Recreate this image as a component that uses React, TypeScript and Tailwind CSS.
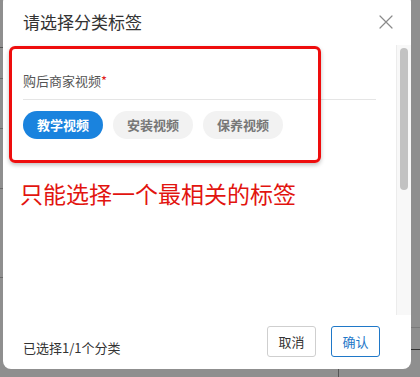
import React, { useState } from 'react'

const tags = ['教学视频', '安装视频', '保养视频']

const App: React.FC = () => {
  const [selected, setSelected] = useState('教学视频')

  return (
    <div
      className="relative w-[420px] h-[377px] overflow-hidden bg-[#8f8f8f]"
      style={{ fontFamily: '"Noto Sans CJK SC", "Noto Sans", sans-serif' }}
    >
      {/* underlying page lines */}
      <div className="absolute left-0 top-[47px] w-[3px] h-px bg-[#555]" />
      <div className="absolute left-0 top-[78px] w-[3px] h-px bg-[#6a6a6a]" />
      <div className="absolute left-0 top-[128px] w-[3px] h-px bg-[#6a6a6a]" />
      <div className="absolute left-0 top-[188px] w-[3px] h-px bg-[#6a6a6a]" />
      <div className="absolute left-0 top-[277px] w-[3px] h-px bg-[#6a6a6a]" />
      <div className="absolute right-0 top-[327px] w-[9px] h-px bg-[#7a7a7a]" />
      <div className="absolute right-0 top-[349px] w-[9px] h-px bg-[#333]" />
      <div className="absolute left-[338px] top-[369px] w-px h-[8px] bg-[#555]" />

      {/* modal */}
      <div className="relative ml-[3px] mt-[-6px] w-[408px] h-[375px] bg-white rounded-lg flex flex-col">
        {/* header */}
        <div className="h-[51px] shrink-0 flex items-center justify-between pl-[20px] pr-[17px] pt-[4px]">
          <h1 className="text-[17px] text-[#333] leading-6">请选择分类标签</h1>
          <button className="w-[16px] h-[16px] flex items-center justify-center">
            <svg width="14" height="14" viewBox="0 0 14 14" fill="none">
              <path d="M1 1L13 13M13 1L1 13" stroke="#8a8a8a" strokeWidth="1.2" strokeLinecap="round" />
            </svg>
          </button>
        </div>

        {/* body */}
        <div className="relative h-[270px] shrink-0 flex">
          <div className="flex-1 pl-[20px] pr-[20px]">
            <div className="pt-[27px] text-[13px] leading-[18px] text-[#555]">
              购后商家视频<span className="text-[#e02020]">*</span>
            </div>
            <div className="mt-[9px] h-px bg-[#e5e5e5]" />
            <div className="mt-[11px] flex gap-[10px]">
              {tags.map((t) => (
                <button
                  key={t}
                  onClick={() => setSelected(t)}
                  className={`w-[80px] h-[28px] rounded-full text-[13px] font-bold ${
                    selected === t ? 'bg-[#1a83de] text-white' : 'bg-[#f2f2f2] text-[#777]'
                  }`}
                >
                  {t}
                </button>
              ))}
            </div>
            <p className="mt-[39px] ml-[-3px] text-[23px] leading-[30px] text-[#e2140f]">
              只能选择一个最相关的标签
            </p>
          </div>

          {/* scrollbar */}
          <div className="w-[15px] shrink-0 bg-[#f8f8f8] border-l border-[#ececec] pt-[3px] pl-[3px]">
            <div className="w-[8px] h-[142px] rounded-full bg-[#c2c2c2]" />
          </div>

          {/* annotation frame */}
          <div className="absolute left-[6px] top-[1px] w-[312px] h-[117px] border-[3px] border-[#ee0d0d] rounded-md shadow-[0_2px_4px_rgba(0,0,0,0.25)]" />
        </div>

        {/* footer */}
        <div className="flex-1 flex items-center justify-between pl-[20px] pr-[31px] pb-[1px]">
          <span className="text-[13px] text-[#333] mt-[12px]">已选择1/1个分类</span>
          <div className="flex gap-[15px]">
            <button className="w-[49px] h-[31px] rounded-[3px] border border-[#cfcfcf] text-[13px] text-[#333]">
              取消
            </button>
            <button className="w-[49px] h-[31px] rounded-[3px] border border-[#1f78c8] text-[13px] text-[#1f78c8]">
              确认
            </button>
          </div>
        </div>
      </div>
    </div>
  )
}

export default App
